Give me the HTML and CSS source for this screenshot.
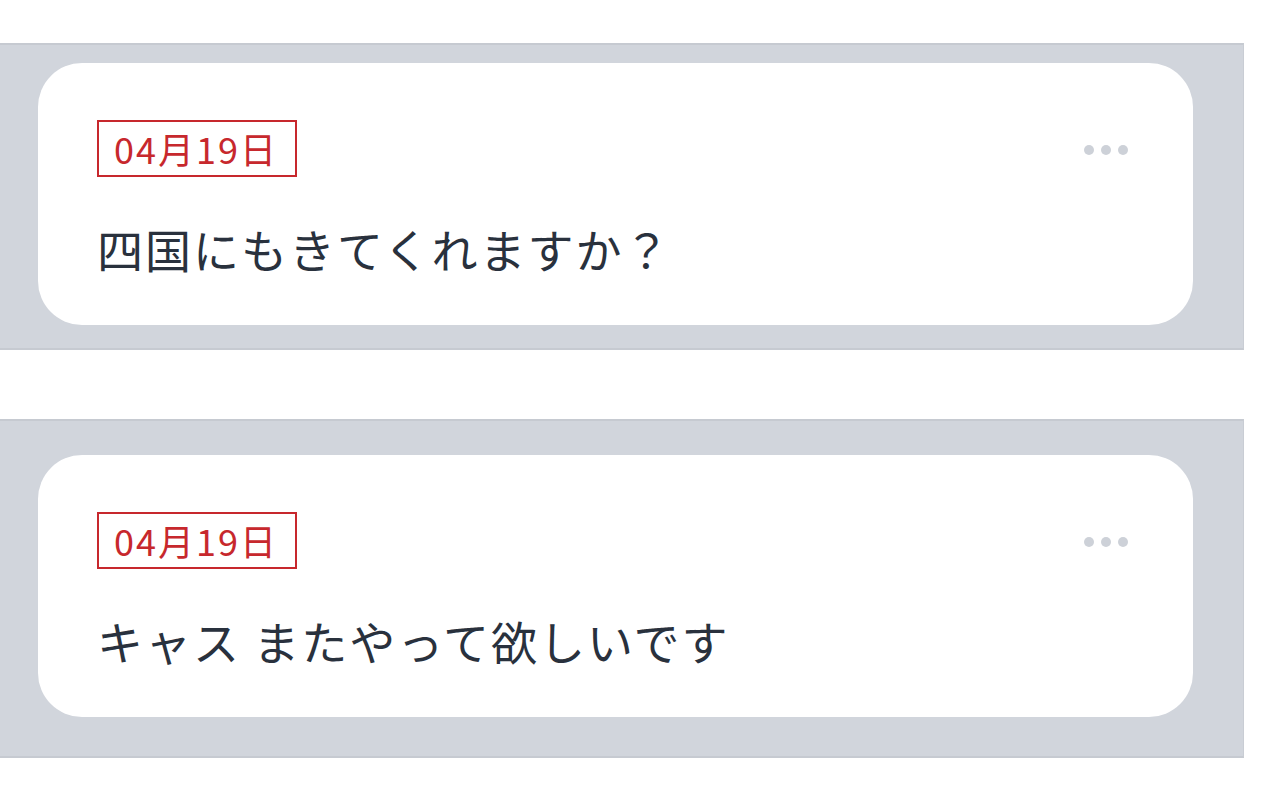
FILE: index.html
```html
<!DOCTYPE html>
<html lang="ja">
<head>
<meta charset="utf-8">
<link rel="stylesheet" href="styles.css">
</head>
<body>
<div class="list">
  <section class="panel panel-first">
    <div class="card">
      <div class="card-head">
        <span class="date">04月19日</span>
        <span class="more" aria-label="more"><i></i><i></i><i></i></span>
      </div>
      <p class="msg">四国にもきてくれますか？</p>
    </div>
  </section>
  <section class="panel panel-second">
    <div class="card">
      <div class="card-head">
        <span class="date">04月19日</span>
        <span class="more" aria-label="more"><i></i><i></i><i></i></span>
      </div>
      <p class="msg">キャス またやって欲しいです</p>
    </div>
  </section>
</div>
</body>
</html>
```
FILE: styles.css
```css
html, body {
  margin: 0;
  padding: 0;
  background: #ffffff;
}
body {
  font-family: "Noto Sans CJK JP", "Noto Sans", sans-serif;
  color: #29313d;
}
.list {
  display: flex;
  flex-direction: column;
  padding-top: 43px;
  gap: 69px;
}
.panel {
  width: 1244px;
  box-sizing: border-box;
  background: #d1d5dc;
  border-top: 2px solid #c6cad1;
  border-bottom: 2px solid #c6cad1;
  border-right: 1px solid #c9cdd4;
}
.panel-first {
  padding: 18px 0 23px 38px;
}
.panel-second {
  padding: 34px 0 39px 38px;
}
.card {
  width: 1155px;
  height: 262px;
  box-sizing: border-box;
  background: #ffffff;
  border-radius: 44px;
  padding: 57px 65px 0 59px;
}
.card-head {
  display: flex;
  justify-content: space-between;
  align-items: center;
}
.date {
  display: inline-block;
  border: 2px solid #c7282d;
  color: #c7282d;
  font-size: 36px;
  letter-spacing: 2px;
  line-height: 53px;
  height: 53px;
  padding: 0 17px 0 15px;
}
.more {
  display: flex;
  gap: 7px;
  margin-top: 3px;
}
.more i {
  display: block;
  width: 10px;
  height: 10px;
  border-radius: 50%;
  background: #cdd1d8;
}
.msg {
  margin: 44px 0 0;
  font-size: 46px;
  letter-spacing: 2px;
  line-height: 54px;
}
```
